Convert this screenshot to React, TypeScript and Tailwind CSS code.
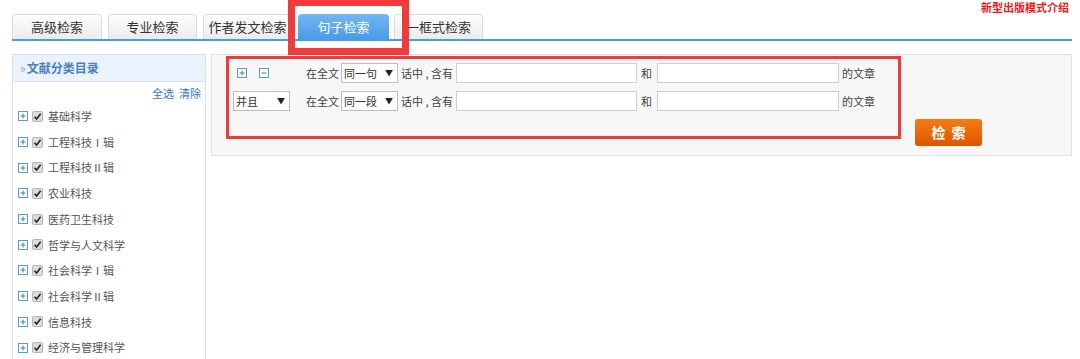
import React from "react";

const tabs = [
  { t: "高级检索", w: "w-[90px]" },
  { t: "专业检索", w: "w-[89px]" },
  { t: "作者发文检索", w: "w-[89px]" },
  { t: "句子检索", w: "w-[91px]" },
  { t: "一框式检索", w: "w-[89px]" },
];
const categories = [
  "基础科学",
  "工程科技Ⅰ辑",
  "工程科技Ⅱ辑",
  "农业科技",
  "医药卫生科技",
  "哲学与人文科学",
  "社会科学Ⅰ辑",
  "社会科学Ⅱ辑",
  "信息科技",
  "经济与管理科学",
];

function BoxIcon({ minus }: { minus?: boolean }) {
  return (
    <svg width="10" height="10" viewBox="0 0 10 10">
      <rect x="0.5" y="0.5" width="9" height="9" fill="#fff" stroke="#5a9bd5" />
      <line x1="2.5" y1="5" x2="7.5" y2="5" stroke="#3a7cc4" />
      {!minus && <line x1="5" y1="2.5" x2="5" y2="7.5" stroke="#3a7cc4" />}
    </svg>
  );
}

function Check() {
  return (
    <span className="w-[11px] h-[11px] rounded-[2px] bg-[#dcdcdc] border border-[#b5b5b5] flex items-center justify-center">
      <svg width="9" height="9" viewBox="0 0 9 9">
        <path d="M1.5 4.8 L3.6 7 L7.6 1.8" fill="none" stroke="#222" strokeWidth="1.6" />
      </svg>
    </span>
  );
}

function Select({ label, w }: { label: string; w: string }) {
  return (
    <div
      className={`${w} h-[20px] bg-white border border-[#bdbdbd] flex items-center justify-between pl-[2px] pr-[4px] text-[11px] text-[#333]`}
    >
      <span>{label}</span>
      <span className="text-[8px] text-[#222]">▼</span>
    </div>
  );
}

function Row({ first }: { first?: boolean }) {
  return (
    <div className="flex items-center h-[20px] text-[11px] text-[#444]">
      {first ? (
        <div className="w-[73px] flex items-center gap-[12px] pl-[8px]">
          <BoxIcon />
          <BoxIcon minus />
        </div>
      ) : (
        <div className="w-[73px] pl-[4px]">
          <Select label="并且" w="w-[57px]" />
        </div>
      )}
      <span className="ml-[4px] mr-[2px]">在全文</span>
      <Select label={first ? "同一句" : "同一段"} w="w-[57px]" />
      <span className="ml-[3px] mr-[3px]">话中 , 含有</span>
      <div className="w-[181px] h-[20px] bg-white border border-[#cfcfcf]" />
      <span className="mx-[4px] w-[12px]">和</span>
      <div className="w-[182px] h-[20px] bg-white border border-[#cfcfcf]" />
      <span className="ml-[3px]">的文章</span>
    </div>
  );
}

export default function App() {
  return (
    <div
      className="relative w-[1080px] h-[359px] overflow-hidden bg-white"
      style={{ fontFamily: '"Noto Sans CJK SC", "Noto Sans", sans-serif' }}
    >
      <div className="relative h-[41px]">
        <div className="ml-[12px] w-[1060px] h-[41px] pt-[14px] flex items-stretch border-b-2 border-[#4a9be8]">
          {tabs.map(({ t, w }, i) =>
            i === 3 ? (
              <div
                key={t}
                className={`${w} ml-[6px] rounded-t-[4px] bg-gradient-to-b from-[#72b6f2] to-[#4a9be8] text-white text-[13px] flex items-center justify-center`}
              >
                {t}
              </div>
            ) : (
              <div
                key={t}
                className={`${w} ${i === 0 ? "" : i === 4 ? "ml-[5px]" : "ml-[6px]"} rounded-t-[4px] border border-b-0 border-[#dcdcdc] bg-gradient-to-b from-[#fdfdfd] to-[#ececec] text-[#333] text-[13px] flex items-center justify-center`}
              >
                {t}
              </div>
            )
          )}
        </div>
        <div className="absolute right-[11px] top-[1px] leading-[12px] text-[11px] font-bold text-[#f01818]">
          新型出版模式介绍
        </div>
      </div>

      <div className="flex gap-[5px] mt-[13px] ml-[12px]">
        <div className="w-[194px] h-[320px] border border-[#d3e3f5] bg-white">
          <div className="h-[27px] bg-[#e9f2fd] border-b border-[#d6e4f5] flex items-center pl-[7px] text-[12px] font-bold text-[#4a7fc1]">
            <span className="font-normal text-[#8aa9cf] mr-[1px]">»</span>文献分类目录
          </div>
          <div className="flex justify-end gap-[5px] pr-[4px] pt-[3px] text-[11px] text-[#3a75c4]">
            <span>全选</span>
            <span>清除</span>
          </div>
          <div className="flex flex-col pt-[2px]">
            {categories.map((c) => (
              <div key={c} className="h-[25.7px] flex items-center pl-[5px] gap-[4px] text-[11px] text-[#555]">
                <BoxIcon />
                <Check />
                <span className="ml-[1px]">{c}</span>
              </div>
            ))}
          </div>
        </div>

        <div className="relative w-[861px] h-[102px] bg-[#f7f7f7] border border-[#e2e2e2]">
          <div className="absolute left-[14px] top-[1px] w-[675px] h-[83px] border-[3px] border-[#f23a3a] flex flex-col gap-[8px] pt-[4px]">
            <Row first />
            <Row />
          </div>
          <div className="absolute left-[703px] top-[64px] w-[67px] h-[27px] rounded-[3px] bg-gradient-to-b from-[#f57c12] to-[#dd5500] text-white text-[14px] font-bold flex items-center justify-center tracking-[6px] pl-[6px]">
            检索
          </div>
        </div>
      </div>

      <div className="absolute left-[288px] top-[-1px] w-[121px] h-[56px] border-[7px] border-[#f23a3a]" />
    </div>
  );
}
